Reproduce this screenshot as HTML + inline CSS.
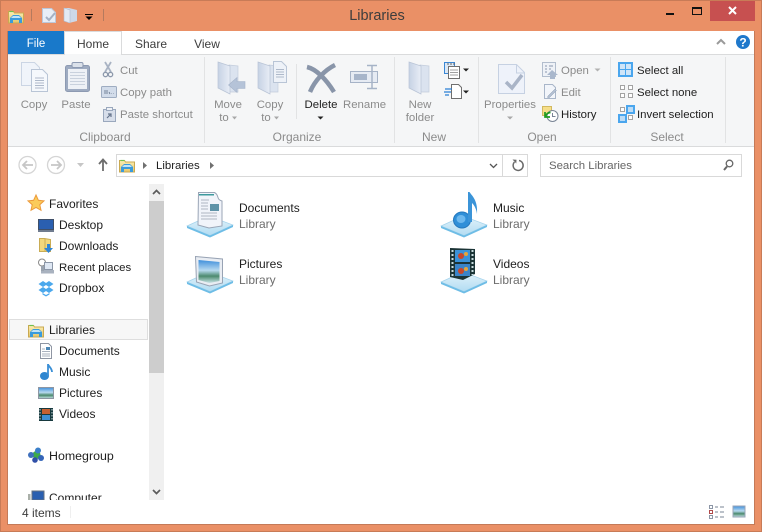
<!DOCTYPE html>
<html><head><meta charset="utf-8"><title>Libraries</title>
<style>
html,body{margin:0;padding:0;width:762px;height:532px;overflow:hidden;background:#EA9066}
svg{display:block}
text{font-family:"Liberation Sans",sans-serif;font-size:12px;fill:#1e1e1e}
.g{fill:#8b8b8b}.m{text-anchor:middle}.h{fill:#6d6d6d}.r{font-size:11.400px}
</style></head><body>
<svg width="762" height="532" viewBox="0 0 762 532" xmlns="http://www.w3.org/2000/svg">
<defs>
<clipPath id="navclip"><rect x="8" y="181" width="141" height="319"/></clipPath>
<linearGradient id="fol" x1="0" y1="0" x2="0" y2="1"><stop offset="0" stop-color="#fdf0b4"/><stop offset="1" stop-color="#e3c46c"/></linearGradient>
<linearGradient id="bf" x1="0" y1="0" x2="1" y2="0"><stop offset="0" stop-color="#c6d2e4"/><stop offset="1" stop-color="#e8edf6"/></linearGradient>
<linearGradient id="base" x1="0" y1="0" x2="0" y2="1"><stop offset="0" stop-color="#e2f3fb"/><stop offset="1" stop-color="#b2dcf2"/></linearGradient>
<linearGradient id="pic" x1="0" y1="0" x2="0" y2="1"><stop offset="0" stop-color="#3f8fdb"/><stop offset=".45" stop-color="#b7d9ef"/><stop offset=".7" stop-color="#4c8a6e"/><stop offset="1" stop-color="#c6e3e6"/></linearGradient>
<g id="libf">
<path d="M.5 14V2.500h5l1 1.500h9V14z" fill="url(#fol)" stroke="#c9a951"/>
<path d="M1.500 2.500h4" stroke="#6fc04f" stroke-width="1.200"/>
<path d="M2 14V9l3-3h6l3 3v5h-3v-3H5v3z" fill="#3a9bdc"/>
<path d="M3 9l2-2h6l2 2z" fill="#bfe3f7"/>
</g>
<g id="bfold">
<path d="M11 3l9 1v26h-9z" fill="#dbe3ef" stroke="#c3cddc" stroke-width=".7"/>
<path d="M0 0l12 4v28L0 26z" fill="url(#bf)" stroke="#b9c4d6" stroke-width=".7"/>
</g>
<g id="lbase">
<path d="M1 12L23 2l24 9-23 10.500z" fill="url(#base)" stroke="#a4d3ec" stroke-width=".7"/>
<path d="M1 12l23 9.500 23-10.500v2L24 23.500 1 14z" fill="#6ebde6"/>
</g>
</defs>

<!-- window frame -->
<rect width="762" height="532" fill="#EA9066"/>
<path d="M.5 532V.5H761.500V532" fill="none" stroke="#c87b57"/>
<path d="M0 531.500H762" stroke="#c87b57"/>
<rect x="8" y="31" width="746" height="493" fill="#fff"/>
<path d="M7.500 31V524.500H754.500V31" fill="none" stroke="#c47a58"/>

<!-- title bar -->
<use href="#libf" x="8" y="9"/>
<rect x="31" y="9" width="1" height="12" fill="#b57a5e"/><rect x="103" y="9" width="1" height="12" fill="#b57a5e"/>
<path d="M42.500 8.500h9l4 4v10h-13z" fill="#e8eef7" stroke="#bcc8da"/>
<path d="M46 17l3 3 6-7" fill="none" stroke="#a5b1c4" stroke-width="2"/>
<path d="M64 8h5l8 2v11l-8 2-5-2z" fill="#cdd8e8"/><path d="M64 8l6 2v13l-6-2z" fill="#e3e9f3" stroke="#aebbd0" stroke-width=".6"/>
<rect x="85" y="14" width="8" height="1" fill="#000"/><path d="M85.500 16.500h7l-3.500 3.500z" fill="#000"/>
<text x="377" y="20" class="m" style="font-size:14.500px;fill:#3d3d3d">Libraries</text>
<rect x="666" y="13" width="8" height="2" fill="#111"/>
<rect x="692.500" y="7.500" width="9" height="7" fill="none" stroke="#111"/><rect x="692" y="7" width="10" height="2" fill="#111"/>
<rect x="710" y="1" width="45" height="20" fill="#C75050"/>
<path d="M729 7l7 7M736 7l-7 7" stroke="#fff" stroke-width="2"/>

<!-- tabs -->
<rect x="8" y="31" width="56" height="23" fill="#1979CA"/>
<text x="36" y="47" class="m" style="fill:#fff;font-size:11.500px">File</text>
<rect x="8" y="54" width="746" height="1" fill="#dadbdc"/>
<path d="M64.500 55V31.500H121.500V55" fill="#fff" stroke="#dadbdc"/>
<rect x="65" y="54" width="56" height="2" fill="#F5F6F7"/>
<text x="93" y="48" class="m" style="fill:#3c3c3c">Home</text>
<text x="151" y="48" class="m" style="fill:#3c3c3c">Share</text>
<text x="207" y="48" class="m" style="fill:#3c3c3c">View</text>
<path d="M717 44l4-4 4 4" fill="none" stroke="#9a9a9a" stroke-width="2"/>
<circle cx="743" cy="42" r="7" fill="#1f78cb"/>
<text x="743" y="46.500" class="m" style="fill:#fff;font-size:12px;font-weight:bold">?</text>

<!-- ribbon -->
<rect x="8" y="55" width="746" height="91" fill="#F5F6F7"/>
<rect x="8" y="146" width="746" height="1" fill="#dadbdc"/>
<rect x="204" y="57" width="1" height="86" fill="#e2e3e4"/><rect x="394" y="57" width="1" height="86" fill="#e2e3e4"/><rect x="478" y="57" width="1" height="86" fill="#e2e3e4"/><rect x="610" y="57" width="1" height="86" fill="#e2e3e4"/><rect x="725" y="57" width="1" height="86" fill="#e2e3e4"/>
<rect x="296" y="64" width="1" height="55" fill="#e2e3e4"/>

<!-- clipboard -->
<path d="M21.500 62.500h13l5 5v18h-18z" fill="#f0f4fa" stroke="#cbd5e4"/>
<path d="M31.500 69.500h11l5 5v17h-16z" fill="#f5f8fc" stroke="#b9c5d6"/>
<path d="M35 78h9M35 80.500h9M35 83h9M35 85.500h9M35 88h9" stroke="#aeb9ca"/>
<rect x="65.500" y="65.500" width="24" height="26" rx="2" fill="#9eabc1" stroke="#8d9ab2"/>
<rect x="68" y="69" width="19" height="20" fill="#eef1f6"/>
<path d="M70 72.500h15M70 75.500h15M70 78.500h15M70 81.500h15M70 84.500h15" stroke="#c9d1dd"/>
<rect x="72" y="62.500" width="11" height="5" rx="1.500" fill="#dbe1ea" stroke="#8d9ab2"/>
<path d="M105 62l6 10M111 62l-6 10" stroke="#a9b3c3" stroke-width="1.800"/><circle cx="105.500" cy="74.500" r="2.200" fill="none" stroke="#8d99ac" stroke-width="1.300"/><circle cx="110.500" cy="74.500" r="2.200" fill="none" stroke="#8d99ac" stroke-width="1.300"/>
<rect x="101.500" y="86.500" width="15" height="11" rx="1" fill="#d2dcea" stroke="#9eacc1"/>
<path d="M105 90v4M107 90v4M109 92l1 2M111.500 93.500h.5M113.500 93.500h.5" stroke="#5e6e85" stroke-width=".8"/>
<rect x="103.500" y="109.500" width="12" height="12" fill="#d7deea" stroke="#9aa8bd"/><rect x="106.500" y="107.500" width="6" height="3" fill="#eef1f6" stroke="#9aa8bd"/>
<path d="M107 118l4-4M108 114h3v3" stroke="#66758c" stroke-width="1.200" fill="none"/>
<text x="34" y="108" class="m g r">Copy</text><text x="76" y="108" class="m g r">Paste</text>
<text x="120" y="74" class="g r">Cut</text><text x="120" y="96" class="g r">Copy path</text><text x="120" y="118" class="g r">Paste shortcut</text>
<text x="105" y="141" class="m g">Clipboard</text>

<!-- organize -->
<use href="#bfold" x="218" y="62"/>
<path d="M245 81.500h-8v-4l-8.500 7.500 8.500 7.500v-4h8z" fill="#b5c3d8" stroke="#a5b3c9" stroke-width=".6"/>
<use href="#bfold" x="258" y="62"/>
<path d="M273.500 61.500h8l5 5v16h-13z" fill="#eef2f8" stroke="#b9c5d6"/>
<path d="M276 69.500h8M276 72h8M276 74.500h8M276 77h8" stroke="#aeb9ca"/>
<text x="228" y="108" class="m g r">Move</text><text x="224" y="121" class="m g r">to</text><path d="M232 116.500h5l-2.500 3z" fill="#a8a8a8"/>
<text x="270" y="108" class="m g r">Copy</text><text x="266" y="121" class="m g r">to</text><path d="M274 116.500h5l-2.500 3z" fill="#a8a8a8"/>
<path d="M307 67C316 69 326 79 334 92M335 65C325 70 315 80 310 92" fill="none" stroke="#8995a9" stroke-width="4.500"/>
<rect x="350.500" y="71.500" width="27" height="11" fill="#e6ebf3" stroke="#a6b3c7"/><rect x="354" y="74" width="13" height="6" fill="#a7b5ca"/>
<path d="M367 65.500h10M367 88.500h10M372 66v22" stroke="#a6b3c7" stroke-width="1.500" fill="none"/>
<text x="321" y="108" class="m r">Delete</text><path d="M317.500 116.500h6l-3 3z" fill="#222"/>
<text x="364.500" y="108" class="m g r">Rename</text>
<text x="297" y="141" class="m g">Organize</text>

<!-- new -->
<use href="#bfold" x="409" y="62"/>
<rect x="444.500" y="62.500" width="10" height="11" fill="#dbe8f6" stroke="#3a87d4"/>
<path d="M448.500 66.500h11v12h-11z" fill="#fff" stroke="#6f6f6f"/>
<path d="M450 70h8M450 72.500h8M450 75h8" stroke="#a0a0a0"/>
<path d="M448 63v2M451 63v2M454 63v2" stroke="#666"/>
<path d="M463 68.500h6l-3 3z" fill="#222"/>
<path d="M451.500 84.500h7l3 3v11h-10z" fill="#fff" stroke="#6f6f6f"/>
<path d="M445 89h7M444 92h7M445 95h4" stroke="#2b7fd5" stroke-width="1.200"/>
<path d="M463 90.500h6l-3 3z" fill="#222"/>
<text x="420" y="108" class="m g r">New</text><text x="420" y="121" class="m g r">folder</text>
<text x="434" y="141" class="m g">New</text>

<!-- open -->
<path d="M498.500 64.500h18l8 8v21h-26z" fill="#eef2fa" stroke="#c6d1e2"/>
<path d="M516.500 65v8h8" fill="none" stroke="#c6d1e2"/>
<path d="M506 82l6 6 10-13" fill="none" stroke="#a9b4c7" stroke-width="3.500"/>
<text x="510" y="108" class="m g r">Properties</text><path d="M507 116.500h6l-3 3z" fill="#a8a8a8"/>
<text x="542" y="141" class="m g">Open</text>
<rect x="542.500" y="62.500" width="13" height="14" fill="#eff2f7" stroke="#b2bdcd"/>
<path d="M545 66h2M545 69h2M545 72h2M549 66h4M549 69h2" stroke="#8a97ac"/>
<path d="M552 70l-5 5h3v4h5v-4h3z" fill="#a9b7cc"/>
<text x="561" y="74" class="g r">Open</text><path d="M594.500 68.500h6l-3 3z" fill="#b2b2b2"/>
<path d="M544.500 84.500h8l3 3v11h-11z" fill="#f2f5fa" stroke="#a9b6c9"/>
<path d="M548 96l7-7 1.500 1.500-7 7h-2z" fill="#b2bfd2" stroke="#8f9db3" stroke-width=".5"/>
<text x="561" y="96" class="g r">Edit</text>
<path d="M542.500 106.500h9v9h-9z" fill="#f6de88" stroke="#d2b960"/>
<circle cx="552.500" cy="116" r="5.500" fill="#fff" stroke="#7a8596"/>
<path d="M552.500 113v3.500h3" fill="none" stroke="#7a8596"/>
<path d="M545 112v5h5M545.500 116.500c1-3 3-4 5-4" fill="none" stroke="#1f9a1f" stroke-width="1.700"/>
<text x="561" y="118" class="r">History</text>

<!-- select -->
<rect x="618" y="62" width="15" height="15" fill="#4aa6ee"/>
<rect x="620" y="64" width="5" height="5" fill="#cfe5f8"/><rect x="626" y="64" width="5" height="5" fill="#cfe5f8"/><rect x="620" y="70" width="5" height="5" fill="#cfe5f8"/><rect x="626" y="70" width="5" height="5" fill="#cfe5f8"/>
<rect x="620.500" y="85.500" width="4" height="4" fill="#fff" stroke="#a3a3a3"/><rect x="628.500" y="85.500" width="4" height="4" fill="#fff" stroke="#a3a3a3"/><rect x="620.500" y="93.500" width="4" height="4" fill="#fff" stroke="#a3a3a3"/><rect x="628.500" y="93.500" width="4" height="4" fill="#fff" stroke="#a3a3a3"/>
<rect x="620.500" y="107.500" width="4" height="4" fill="#fff" stroke="#a3a3a3"/><rect x="628.500" y="115.500" width="4" height="4" fill="#fff" stroke="#a3a3a3"/>
<rect x="627" y="106" width="7" height="7" fill="#bcdcf6" stroke="#4aa6ee" stroke-width="2"/><rect x="619" y="115" width="7" height="7" fill="#bcdcf6" stroke="#4aa6ee" stroke-width="2"/>
<text x="637" y="74" class="r">Select all</text><text x="637" y="96" class="r">Select none</text><text x="637" y="118" class="r">Invert selection</text>
<text x="667" y="141" class="m g">Select</text>

<!-- nav bar -->
<circle cx="27.500" cy="165" r="8.500" fill="#fff" stroke="#d5d5d5" stroke-width="1.300"/>
<path d="M33 165h-9M27 161l-4 4 4 4" fill="none" stroke="#c6c6c6" stroke-width="1.800"/>
<circle cx="56" cy="165" r="8.500" fill="#fff" stroke="#d5d5d5" stroke-width="1.300"/>
<path d="M51 165h9M57 161l4 4-4 4" fill="none" stroke="#c6c6c6" stroke-width="1.800"/>
<path d="M77 163h7l-3.500 4z" fill="#c6c6c6"/>
<path d="M103 171v-11M99 164l4-4.500 4 4.500" fill="none" stroke="#6d6d6d" stroke-width="1.800"/>
<rect x="116.500" y="154.500" width="411" height="22" fill="#fff" stroke="#d9d9d9"/>
<rect x="502" y="155" width="1" height="21" fill="#d9d9d9"/>
<use href="#libf" x="119" y="158"/>
<path d="M143 162l4 3.500-4 3.500z" fill="#707070"/>
<text x="156" y="169" class="r">Libraries</text>
<path d="M210 162l4 3.500-4 3.500z" fill="#707070"/>
<path d="M490 164l3.500 3.500 3.500-3.500" fill="none" stroke="#555" stroke-width="1.300"/>
<path d="M519 160.500a5 5 0 1 1-4.500 1.500" fill="none" stroke="#6a6a6a" stroke-width="1.500"/><path d="M512.500 159.500l4 .2-.2 3.800z" fill="#6a6a6a"/>
<rect x="540.500" y="154.500" width="201" height="22" fill="#fff" stroke="#d9d9d9"/>
<text x="549" y="169" class="r" style="fill:#666">Search Libraries</text>
<circle cx="729.500" cy="163.500" r="3.300" fill="none" stroke="#666" stroke-width="1.300"/><path d="M727 166.500l-3 3.500" stroke="#666" stroke-width="2"/>

<!-- nav pane -->
<rect x="149" y="184" width="15" height="316" fill="#f0f0f0"/>
<rect x="149" y="201" width="15" height="172" fill="#cdcdcd"/>
<path d="M153 194l3.500-3.500 3.500 3.500" fill="none" stroke="#5c5c5c" stroke-width="1.700"/>
<path d="M153 490l3.500 3.500 3.500-3.500" fill="none" stroke="#5c5c5c" stroke-width="1.700"/>
<rect x="9.500" y="319.500" width="138" height="20" fill="#f7f7f7" stroke="#dedede"/>

<g clip-path="url(#navclip)">
<text x="49" y="208">Favorites</text>
<path d="M36 195l2.400 5.300 5.600.6-4.200 3.800 1.200 5.600-5-2.900-5 2.900 1.200-5.600-4.200-3.800 5.600-.6z" fill="#fbcb5a" stroke="#ec9a3a"/>
<text x="59" y="229">Desktop</text>
<rect x="38.500" y="219.500" width="15" height="10" fill="#2a5fb0" stroke="#3f4f68"/><rect x="38" y="230" width="16" height="2" fill="#707c8f"/>
<text x="59" y="250">Downloads</text>
<path d="M39.500 238.500h5l6 1v12h-11z" fill="#f2d77c" stroke="#c9ac55"/><path d="M45 239v13" stroke="#c9ac55"/>
<path d="M47 244h3v4h3l-4.500 5-4.500-5h3z" fill="#2f85d6"/>
<text x="59" y="271" class="r">Recent places</text>
<circle cx="42" cy="262.500" r="3.500" fill="#fff" stroke="#8a8a8a"/>
<rect x="44.500" y="262.500" width="8" height="7" fill="#dfe8f4" stroke="#8c97a8"/><rect x="41" y="270" width="13" height="3.500" fill="#a9b2bf"/>
<rect x="41" y="266" width="3" height="5" fill="#9aa3af"/>
<text x="59" y="292">Dropbox</text>
<path d="M43 281l4.500 3-4.500 3-4.500-3zM49 281l4.500 3-4.500 3-4.500-3zM43 287l4.500 3-4.500 3-4.500-3zM49 287l4.500 3-4.500 3-4.500-3z" fill="#4ba8ec"/><path d="M42.500 293l3.500 2 3.500-2v1.500l-3.500 2-3.500-2z" fill="#4ba8ec"/>

<text x="49" y="334">Libraries</text>
<use href="#libf" x="28" y="323"/>
<text x="59" y="355">Documents</text>
<path d="M40.500 343.500h8l3 3v12h-11z" fill="#fff" stroke="#8f96a3"/><rect x="46" y="347" width="4" height="3" fill="#4c87b5"/>
<path d="M42 349h3M42 351.500h8M42 354h8M42 356h8" stroke="#aab2be"/>
<text x="59" y="376">Music</text>
<ellipse cx="44.500" cy="376" rx="4.500" ry="4" fill="#2f86d0"/><path d="M48 376v-12c0 2 4 4 4 8" fill="none" stroke="#3a8fd6" stroke-width="1.800"/>
<text x="59" y="397">Pictures</text>
<rect x="38.500" y="387.500" width="15" height="11" fill="url(#pic)" stroke="#8d96a3"/>
<text x="59" y="418">Videos</text>
<rect x="39" y="408" width="14" height="13" fill="#17393e"/><rect x="42" y="409" width="8" height="5" fill="#c5602f"/><rect x="42" y="415" width="8" height="5" fill="#3d8fd2"/>
<path d="M40 409v11M52 409v11" stroke="#cfdde0" stroke-dasharray="1.500 1.500"/>
<text x="49" y="460" style="font-size:12.400px">Homegroup</text>
<circle cx="36.500" cy="455" r="4" fill="#3eab49"/><circle cx="38" cy="450.500" r="3" fill="#3b7fc9"/><circle cx="31" cy="455" r="3" fill="#3f70bd"/><circle cx="35" cy="460" r="2.800" fill="#3050a8"/><circle cx="41" cy="458" r="3" fill="#3465b8"/>
<text x="49" y="502">Computer</text>
<rect x="32" y="491" width="12" height="9" fill="#2a5fb0" stroke="#66707f"/><rect x="28" y="494" width="2.500" height="6" fill="#aab0a9"/>
</g>

<!-- content -->
<use href="#lbase" x="186" y="214"/>
<path d="M198.500 192.500h16c2 1 3 3 3.500 5s2 3 4 3.500v25l-13 2-11-3z" fill="#f1f4fa" stroke="#9aa5b6"/>
<rect x="199" y="194" width="15" height="1.500" fill="#3e9a9e"/>
<rect x="210" y="204" width="9" height="7" fill="#5e93a8"/>
<path d="M201 200h8M201 203h7M201 206h7M201 209h7M201 213h16M201 216h16M201 219h16" stroke="#aeb6c3"/>
<text x="239" y="212">Documents</text><text x="239" y="228" class="h">Library</text>

<use href="#lbase" x="186" y="270"/>
<path d="M195.500 256.500l27 2.500v24l-13 3-13-4z" fill="#e9edf3" stroke="#98a3b4"/>
<path d="M198.500 260l21 2v19l-10 2-11-3z" fill="url(#pic)"/>
<text x="239" y="268">Pictures</text><text x="239" y="284" class="h">Library</text>

<use href="#lbase" x="440" y="214"/>
<ellipse cx="462" cy="220" rx="8.500" ry="8" fill="#2f8fd8" stroke="#2478bd"/>
<ellipse cx="461" cy="219" rx="4.500" ry="4" fill="#6cb8ee"/>
<path d="M468 192h1.500C472 196 478 200 477 214C476 207 473 204 472 203V222L468 222z" fill="#3b94d8"/>
<text x="493" y="212">Music</text><text x="493" y="228" class="h">Library</text>

<use href="#lbase" x="440" y="270"/>
<path d="M450 248l25 1v25l-12 6-13-3z" fill="#1b3436"/>
<rect x="455" y="250" width="15" height="12" fill="#3a92d8"/><rect x="455" y="264" width="15" height="12" fill="#3a84c8"/>
<circle cx="461" cy="256" r="3" fill="#c9472a"/><circle cx="466" cy="254" r="2" fill="#e6a53a"/><circle cx="461" cy="271" r="3" fill="#c9472a"/><circle cx="466" cy="269" r="2" fill="#e6a53a"/>
<path d="M452.500 250v26M472.500 250v25" stroke="#c9dde0" stroke-width="2" stroke-dasharray="2 2"/>
<text x="493" y="268">Videos</text><text x="493" y="284" class="h">Library</text>

<!-- status -->
<rect x="8" y="500" width="746" height="24" fill="#fff"/>
<text x="22" y="517" style="fill:#3c3c3c">4 items</text>
<rect x="70" y="506" width="1" height="12" fill="#efefef"/>
<rect x="709.500" y="505.500" width="3" height="3" fill="#fff" stroke="#8c96a6"/><rect x="709.500" y="510.500" width="3" height="3" fill="#fff" stroke="#b04a4a"/><rect x="709.500" y="515.500" width="3" height="3" fill="#fff" stroke="#8c96a6"/>
<path d="M715 507h3M720 507h4M715 512h3M720 512h4M715 517h3M720 517h4" stroke="#7a8494"/>
<rect x="733" y="506" width="12" height="11" fill="url(#pic)" stroke="#9aa6b8"/>
</svg>
</body></html>
